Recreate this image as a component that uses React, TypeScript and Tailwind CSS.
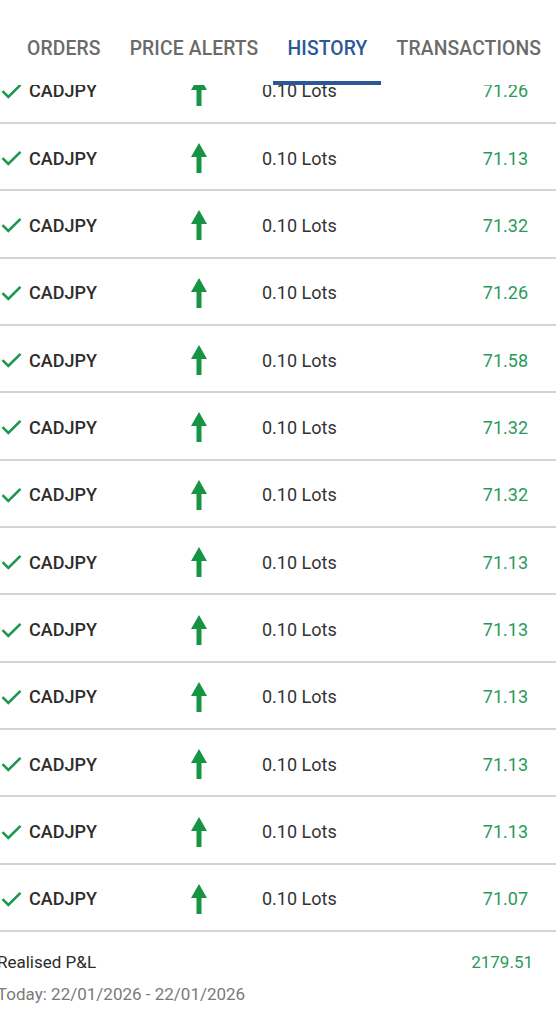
import React from 'react';

const prices = ['71.26', '71.13', '71.32', '71.26', '71.58', '71.32', '71.32', '71.13', '71.13', '71.13', '71.13', '71.13', '71.07'];

const tabs = ['ORDERS', 'PRICE ALERTS', 'HISTORY', 'TRANSACTIONS'];

const CheckIcon = () => (
  <svg width="21" height="16" viewBox="0 0 21 16" fill="none">
    <path d="M1.5 8.2 L7.3 14 L19.5 1.8" stroke="#1e9850" strokeWidth="2.6" strokeLinecap="butt" strokeLinejoin="miter" />
  </svg>
);

const ArrowUp = () => (
  <svg width="16" height="30" viewBox="0 0 16 30">
    <path d="M8 0 L16 14 L10.5 14 L10.5 30 L5.5 30 L5.5 14 L0 14 Z" fill="#179443" />
  </svg>
);

function Row({ price }: { price: string }) {
  return (
    <div className="flex items-center h-[67.35px] pt-[3px] border-b-2 border-[#d4d4d4]">
      <div className="w-[29px] pl-[1px] flex items-center">
        <CheckIcon />
      </div>
      <div className="w-[162px] text-[18px] font-medium text-[#2d2d2d]">CADJPY</div>
      <div className="w-[71px] flex items-center">
        <ArrowUp />
      </div>
      <div className="flex-1 text-[18px] text-[#333333]">0.10 Lots</div>
      <div className="pr-[28px] text-[18px] text-[#2a9a5c]">{price}</div>
    </div>
  );
}

export default function App() {
  return (
    <div className="relative w-[556px] h-[1023px] overflow-hidden bg-white" style={{ fontFamily: 'Roboto, "Noto Sans", sans-serif' }}>
      {/* tab bar sits over the scrolled list */}
      <div className="absolute top-0 left-0 right-0 h-[85px] bg-white z-10">
        <div className="flex items-end h-[64px] pl-[27px] gap-[29px] text-[19.3px] tracking-[0.15px] font-medium text-[#6b6b6b]">
          {tabs.map(t => (
            <div key={t} className={t === 'HISTORY' ? 'text-[#2b579a]' : ''}>{t}</div>
          ))}
        </div>
        <div className="absolute left-[273px] top-[81px] w-[108px] h-[4px] bg-[#2b579a]" />
      </div>

      <div className="pt-[56.6px]">
        {prices.map((p, i) => (
          <Row key={i} price={p} />
        ))}
        <div className="-ml-[3px] pr-[23px] pt-[18px]">
          <div className="flex justify-between text-[17px] text-[#2b2b2b]">
            <span>Realised P&amp;L</span>
            <span className="text-[#2a9a5c]">2179.51</span>
          </div>
          <div className="mt-[6px] text-[17px] text-[#7a7a7a]">Today: 22/01/2026 - 22/01/2026</div>
        </div>
      </div>
    </div>
  );
}
